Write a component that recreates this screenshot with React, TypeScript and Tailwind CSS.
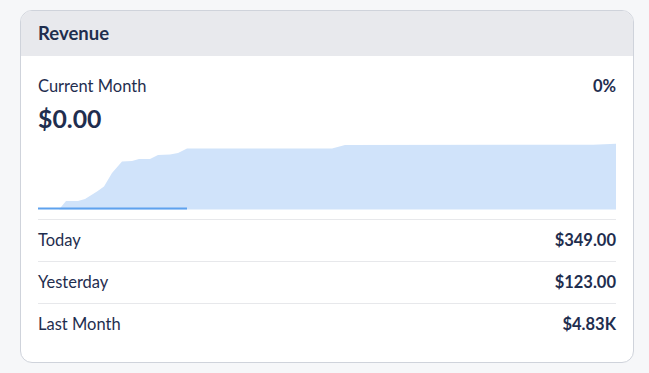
const rows = [
  { label: "Today", value: "$349.00" },
  { label: "Yesterday", value: "$123.00" },
  { label: "Last Month", value: "$4.83K" },
];

const area =
  "M1,66.5 L21,66.5 L28,58 L40,58 L47,56 L59,48.5 L66,43.5 L74,30 L84,18.5 L94,18 L101,16 L112,16 L120,12 L132,11.5 L140,10 L149,5.5 L294,5.5 L307,2 L555,1.7 L578,0.7 L578,66.5 Z";

function RevenueChart() {
  return (
    <svg width="578" height="67" viewBox="0 0 578 67" className="block">
      <path d={area} fill="#d0e3fa" />
      <line x1="0" y1="65.5" x2="149" y2="65.5" stroke="#5ea2ee" strokeWidth="2" />
    </svg>
  );
}

export default function App() {
  return (
    <div className="min-h-[373px] bg-[#f6f7f9] pt-[10px] pl-[20px] font-['Lato',sans-serif] text-[#1f2e4f]">
      <div className="w-[614px] rounded-xl border border-[#cfd3db] bg-white overflow-hidden">
        <div className="h-[45px] bg-[#e8e9ed] px-[17px] flex items-center">
          <h2 className="text-[18.5px] font-bold">Revenue</h2>
        </div>
        <div className="px-[17px] pt-[18px] pb-[17px] text-[16.5px]">
          <div className="flex justify-between items-center h-6">
            <span>Current Month</span>
            <span className="font-bold">0%</span>
          </div>
          <div className="mt-[5px] text-[24.8px] font-bold leading-8">$0.00</div>
          <div className="mt-[8px] mb-[9px]">
            <RevenueChart />
          </div>
          {rows.map((r) => (
            <div
              key={r.label}
              className="h-[42px] flex justify-between items-center border-t border-[#e7e8eb]"
            >
              <span>{r.label}</span>
              <span className="font-bold">{r.value}</span>
            </div>
          ))}
        </div>
      </div>
    </div>
  );
}
